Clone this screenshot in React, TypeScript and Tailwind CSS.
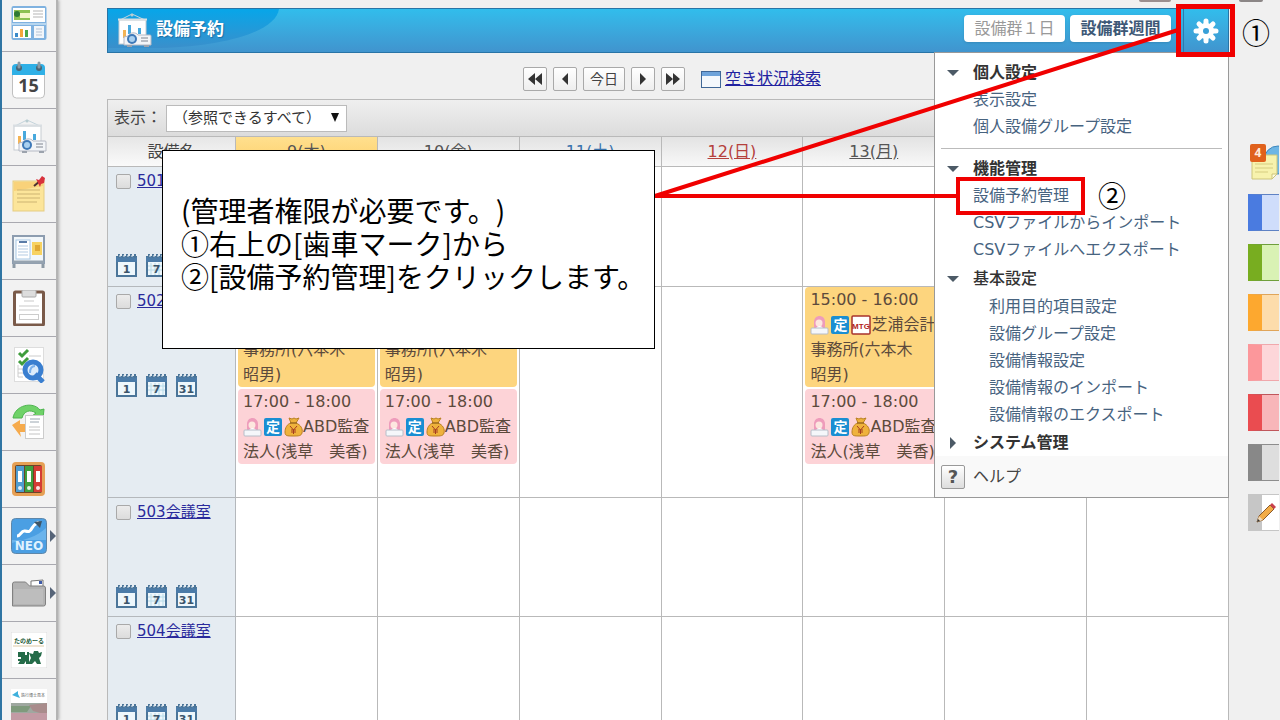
import type { ReactNode } from "react";

function PortalIcon() {
  return (
    <svg viewBox="0 0 36 36" className="h-9 w-9" aria-hidden>
      <rect x="0.5" y="1" width="35" height="34" rx="2" fill="#7fb2e0" />
      <rect x="2" y="3" width="32" height="14" fill="#fff" />
      <rect x="3" y="5" width="16" height="10" fill="#8cc152" />
      <path d="M9 8h10v5H9z" fill="#f3f7c9" />
      <circle cx="6" cy="9" r="3" fill="#2f7a35" />
      <path d="M22 6h10M22 9h10M22 12h10" stroke="#b5b5b5" />
      <path d="M1 19h34" stroke="#b7d6ef" strokeWidth="2" />
      <rect x="2" y="21" width="18" height="12" fill="#fff" />
      <rect x="23" y="21" width="10" height="12" fill="#f2f6fa" />
      <path d="M25 24h6M25 27h6M25 30h6" stroke="#b5c3d4" />
      <rect x="4" y="28" width="3" height="4" fill="#3a8ac9" />
      <rect x="9" y="24" width="3" height="8" fill="#f3a73b" />
      <rect x="14" y="25" width="3" height="7" fill="#4aa84a" />
    </svg>
  );
}

function ScheduleIcon() {
  return (
    <svg viewBox="0 0 36 38" className="h-[38px] w-9" aria-hidden>
      <rect x="1.5" y="4" width="32" height="33" rx="4" fill="#fff" stroke="#c0c0c0" />
      <path d="M1 14V7a4 4 0 0 1 4-4h25a4 4 0 0 1 4 4v7z" fill="#2fb0e6" />
      <circle cx="8" cy="7" r="3" fill="#4a6474" />
      <circle cx="28" cy="7" r="3" fill="#4a6474" />
      <path d="M8 6V2M28 6V2" stroke="#8b9aa4" strokeWidth="3" strokeLinecap="round" />
      <text x="17.5" y="31" textAnchor="middle" fontSize="18" fontWeight="bold" fontFamily="Open Sans, sans-serif" fill="#444">
        15
      </text>
    </svg>
  );
}

function FacilityIcon() {
  return (
    <svg viewBox="0 0 36 36" className="h-9 w-9" aria-hidden>
      <path d="M4 7 16 1l13 6" fill="none" stroke="#c4d4dc" />
      <circle cx="16" cy="2" r="1.5" fill="#b8ccd0" />
      <rect x="3" y="7" width="27" height="24" fill="#fff" stroke="#c6ccd1" />
      <path d="M2 6.500h29" stroke="#d9dee2" strokeWidth="2" />
      <rect x="7" y="17" width="3" height="8" fill="#f4b455" />
      <rect x="12" y="12" width="3" height="9" fill="#48a9dd" />
      <rect x="22" y="15" width="3" height="6" fill="#48a9dd" />
      <path d="M8 24l4-1c2-4 8-4 10-1h12a1 1 0 0 1 1 1v9H8z" fill="#f3f5f8" stroke="#b5b9c4" />
      <path d="M11 33h5M28 33h5" stroke="#9ca3ad" strokeWidth="2" />
      <circle cx="16" cy="26" r="5" fill="#3e79b8" />
      <circle cx="16" cy="26" r="3" fill="#a9d0f0" />
      <path d="M25 25h7M25 28h7" stroke="#b9bdc4" strokeWidth="2" />
    </svg>
  );
}

function MemoIcon() {
  return (
    <svg viewBox="0 0 36 36" className="h-9 w-9" aria-hidden>
      <rect x="2" y="5" width="31" height="30" fill="#fce59a" stroke="#e5cc82" />
      <path d="M3 6h29v4L3 15z" fill="#f9d27a" />
      <path d="M6 14h23M6 18h23M6 22h23M6 26h20" stroke="#cdb472" />
      <path d="M23 10l6-5" stroke="#4b3030" strokeWidth="2" />
      <path d="M25 3l3 1 3-4 3 2-1 5-3 1-1 3z" fill="#d8323c" />
    </svg>
  );
}

function BulletinIcon() {
  return (
    <svg viewBox="0 0 36 36" className="h-9 w-9" aria-hidden>
      <path d="M3 30v5M32 30v5" stroke="#8d9aa5" strokeWidth="3" />
      <rect x="2" y="3" width="31" height="27" fill="#f2f7fa" stroke="#8d9db0" strokeWidth="2" />
      <path d="M2 29h31" stroke="#96a3b0" strokeWidth="3" />
      <rect x="5" y="7" width="14" height="19" fill="#fff" stroke="#a8c8e4" />
      <path d="M8 9h8" stroke="#5a7ca8" strokeWidth="2" />
      <path d="M7 13h10M7 16h10M7 19h10M7 22h10" stroke="#b3cbe3" />
      <rect x="21" y="9" width="10" height="13" fill="#f7d261" />
      <rect x="24" y="12" width="5" height="6" fill="#e0a833" />
    </svg>
  );
}

function ReportIcon() {
  return (
    <svg viewBox="0 0 36 36" className="h-9 w-9" aria-hidden>
      <rect x="3.500" y="2" width="29" height="33" rx="1" fill="#fff" stroke="#7a5a49" strokeWidth="3" />
      <rect x="11" y="0" width="14" height="7" rx="1" fill="#ddd" stroke="#aaa" />
      <path d="M13 11h10M8 16h20M8 20h20" stroke="#c9c9c9" />
      <rect x="8.500" y="24.500" width="19" height="5" fill="none" stroke="#ccc" />
    </svg>
  );
}

function TodoIcon() {
  return (
    <svg viewBox="0 0 36 36" className="h-9 w-9" aria-hidden>
      <rect x="3.500" y="0.500" width="29" height="34" fill="#fff" stroke="#ddd" />
      <path d="M8 6l3 3 6-6M8 14l3 3 6-6" stroke="#3f9d3c" strokeWidth="3" fill="none" />
      <path d="M18 9h12M7 18v12M7 22h5M7 26h5M7 30h5" stroke="#ccc" />
      <circle cx="22" cy="23" r="8" fill="#dcecfb" stroke="#3a7fd0" strokeWidth="5" />
      <path d="M24 27l8 8" stroke="#3a7fd0" strokeWidth="5" />
      <path d="M19 26c0-5 2-7 5-7" stroke="#7cb2ec" strokeWidth="2" fill="none" />
    </svg>
  );
}

function WorkflowIcon() {
  return (
    <svg viewBox="0 0 36 36" className="h-9 w-9" aria-hidden>
      <path d="M2 14C4 1 22-3 29 6l4-1-1 10-11-3 4-3c-6-4-12-2-14 5z" fill="#6fd268" stroke="#4cb44d" />
      <path d="M1 21l8-5v4h7v8H9l1 5z" fill="#f6ab4d" />
      <rect x="14.500" y="11.500" width="18" height="23" fill="#fff" stroke="#ccc" />
      <path d="M19 15h10M19 18h9" stroke="#9aa6b0" strokeWidth="1" />
      <path d="M18 23h11M18 26h11M18 30h11" stroke="#c4c4c4" />
    </svg>
  );
}

function CabinetIcon() {
  return (
    <svg viewBox="0 0 36 36" className="h-9 w-9" aria-hidden>
      <rect x="1" y="1" width="33" height="34" rx="4" fill="#e6a055" />
      <rect x="4" y="4" width="27" height="28" rx="2" fill="#6b4528" />
      <rect x="5" y="5" width="8" height="26" fill="#4f9ccf" />
      <rect x="14" y="5" width="8" height="26" fill="#3f9f3f" />
      <rect x="23" y="5" width="8" height="26" fill="#d43c35" />
      <path d="M7 10h4v11H7zM16 10h4v11h-4zM25 10h4v11h-4z" fill="#fff" />
      <circle cx="9" cy="27" r="2" fill="#e4eef6" />
      <circle cx="18" cy="27" r="2" fill="#e4f4e4" />
      <circle cx="27" cy="27" r="2" fill="#fbe4e4" />
    </svg>
  );
}

function NeoIcon() {
  return (
    <svg viewBox="0 0 36 36" className="h-9 w-9" aria-hidden>
      <rect x="0.5" y="0.5" width="35" height="35" rx="4" fill="#4b9fe3" stroke="#5e87aa" />
      <path d="M1 25C12 22 26 19 35 10v12H1z" fill="#6bb4ec" />
      <path d="M6 18c4 0 4-6 8-5s5 1 7-3 4-4 7-6" fill="none" stroke="#fff" strokeWidth="3" />
      <path d="M23 4l8-1-2 7" fill="#3d5568" />
      <text x="18" y="32" textAnchor="middle" fontSize="12" fontWeight="bold" fontFamily="DejaVu Sans, sans-serif" fill="#dff2ff">
        NEO
      </text>
    </svg>
  );
}

function FolderIcon() {
  return (
    <svg viewBox="0 0 36 36" className="h-9 w-9" aria-hidden>
      <path d="M20 6l12-1v8H20z" fill="#fff" stroke="#777" />
      <path d="M28 6h3v3h-3z" fill="#3d5aa8" />
      <path d="M1.500 31V9a2 2 0 0 1 2-2h11l4 4h14a2 2 0 0 1 2 2v16a2 2 0 0 1-2 2z" fill="#b3b3b3" stroke="#818181" />
      <path d="M3 14h29v15H3z" fill="#bdbdbd" />
    </svg>
  );
}

function TanomailIcon() {
  return (
    <svg viewBox="0 0 36 36" className="h-9 w-9" aria-hidden>
      <rect width="36" height="36" fill="#fff" stroke="#ddd" />
      <text x="18" y="11" textAnchor="middle" fontSize="6" fontWeight="bold" fontFamily="Noto Sans CJK JP, sans-serif" fill="#245b38">
        たのめーる
      </text>
      <path d="M2 14h31" stroke="#ddc9a5" />
      <path d="M7 20h7v3h2v-3h2v12h-3v-3l-2 3H7l2-3H7v-2h3v-2H7z" fill="#246b48" />
      <path d="M18 21l4 1 1-3h4l1 2 3-1-1 4-2 2 2 6h-4l-2-3-3 3h-4l3-6z" fill="#246b48" />
    </svg>
  );
}

function TravelIcon() {
  return (
    <svg viewBox="0 0 36 36" className="h-9 w-9" aria-hidden>
      <rect width="36" height="36" fill="#fff" />
      <path d="M1 6l6-4v3l2 4-3-1z" fill="#3fb0dc" />
      <text x="22" y="8" textAnchor="middle" fontSize="4" fontFamily="Noto Sans CJK JP, sans-serif" fill="#555">
        旅行博士見本
      </text>
      <rect y="14" width="36" height="22" fill="#9fa8a0" />
      <path d="M0 17h20l-4 6H0z" fill="#7f9a7c" />
      <path d="M18 16l18-2v12L22 22z" fill="#a98c8c" />
      <path d="M0 24h36v12H0z" fill="#c39aa4" />
    </svg>
  );
}

const SIDE_ITEMS: { label: string; icon: ReactNode; expandable?: boolean }[] = [
  { label: "ポータル", icon: <PortalIcon /> },
  { label: "スケジュール", icon: <ScheduleIcon /> },
  { label: "設備予約", icon: <FacilityIcon /> },
  { label: "メモ", icon: <MemoIcon /> },
  { label: "掲示板", icon: <BulletinIcon /> },
  { label: "レポート", icon: <ReportIcon /> },
  { label: "ToDo", icon: <TodoIcon /> },
  { label: "ワークフロー", icon: <WorkflowIcon /> },
  { label: "キャビネット", icon: <CabinetIcon /> },
  { label: "NEO", icon: <NeoIcon />, expandable: true },
  { label: "リンク", icon: <FolderIcon />, expandable: true },
  { label: "たのめーる", icon: <TanomailIcon /> },
  { label: "旅行", icon: <TravelIcon /> },
];

function Sidebar() {
  return (
    <nav className="w-[58px] shrink-0 border-r-2 border-l-2 border-r-[#b4b4b4] border-l-[#2f75a3] bg-[#f2f2f2] shadow-[1px_0_3px_#aaa]">
      <ul className="-mt-[5px]">
        {SIDE_ITEMS.map((item) => (
          <li key={item.label} className="relative h-[57px] border-b border-[#a9a9b0]">
            <a href="#" aria-label={item.label} className="flex h-full items-center justify-center">
              {item.icon}
            </a>
            {item.expandable && (
              <svg viewBox="0 0 6 12" className="absolute top-[22px] right-0 h-3 w-[6px]" aria-hidden>
                <path d="M0 0l6 6-6 6z" fill="#566478" />
              </svg>
            )}
          </li>
        ))}
      </ul>
    </nav>
  );
}

const TABS = [
  { id: "blue", className: "border-[#5f82c4] border-l-[#4a7be0] bg-[#cfddfb]" },
  { id: "green", className: "border-[#6f9f3c] border-l-[#78ad20] bg-[#d9f2b4]" },
  { id: "orange", className: "border-[#e0a55a] border-l-[#fda82f] bg-[#fddcab]" },
  { id: "pink", className: "border-[#f0a8ac] border-l-[#fc979b] bg-[#fdd6d9]" },
  { id: "red", className: "border-[#c0575c] border-l-[#ea4c50] bg-[#f8b6b9]" },
  { id: "gray", className: "border-[#8d8d8d] border-l-[#888888] bg-[#dedede]" },
];

function StickyTabs() {
  return (
    <aside className="flex w-[51px] shrink-0 flex-col items-end gap-[13px] pr-px">
      <span className="mr-4 mb-[129px] h-[2px] w-6 rounded-b-sm bg-[#8b8686]" />
      <button type="button" aria-label="付箋 4件" className="h-[37px] w-[31px] overflow-hidden">
        <svg viewBox="0 0 31 37" className="h-full w-full" aria-hidden>
          <circle cx="30" cy="16" r="14" fill="#6db5e4" stroke="#3d87bd" />
          <path d="M4 11h25v19l-5 5H4z" fill="#f7f2ad" stroke="#ccc57a" />
          <path d="M7 20h18M7 24h18M7 28h13" stroke="#d6cd80" />
          <path d="M29 30h-5v5z" fill="#fffce0" stroke="#ccc57a" />
          <rect x="2" y="0" width="16" height="18" rx="2" fill="#e0611c" />
          <text x="10" y="13" textAnchor="middle" fontSize="12" fontFamily="Open Sans, sans-serif" fontWeight="bold" fill="#ffe9d8">
            4
          </text>
        </svg>
      </button>
      {TABS.map((tab) => (
        <button
          key={tab.id}
          type="button"
          aria-label={tab.id}
          className={`h-[37px] w-[31px] border-y border-l-[14px] ${tab.className}`}
        />
      ))}
      <button type="button" aria-label="編集" className="h-[37px] w-[31px] border-y border-l-[14px] border-[#c6c6c6] bg-white">
        <svg viewBox="0 0 22 22" className="-ml-[7px] h-[22px] w-[22px]" aria-hidden>
          <path d="M2 20l2-6L15 3l4 4L8 18z" fill="#f2ac47" stroke="#8a5a2c" />
          <path d="M15 3l2-2 4 4-2 2z" fill="#c9404c" />
          <path d="M2 20l2-6 4 4z" fill="#efd8b5" />
          <path d="M2 20l1-3 2 2z" fill="#333" />
        </svg>
      </button>
    </aside>
  );
}

function MenuHeading({ children, closed = false, light = false }: { children: ReactNode; closed?: boolean; light?: boolean }) {
  return (
    <button
      type="button"
      className={`flex h-[27px] items-center pl-3 text-[#333] ${light ? "font-medium" : "font-bold"}`}
    >
      <svg viewBox="0 0 12 12" className="mr-[14px] h-3 w-3" aria-hidden>
        <path d={closed ? "M3 0l6 6-6 6z" : "M0 3h12L6 9z"} fill="#4c5a66" />
      </svg>
      {children}
    </button>
  );
}

function MenuLinks({ items }: { items: string[] }) {
  return (
    <ul className="pl-[38px] text-[#47637f]">
      {items.map((item) => (
        <li key={item}>
          <a href="#" className="block h-[27px] leading-[27px]">
            {item}
          </a>
        </li>
      ))}
    </ul>
  );
}

function SettingsMenu() {
  return (
    <div className="absolute top-full -right-px z-10 w-[295px] border border-[#999] bg-white text-base whitespace-nowrap">
      <div className="pt-1.5">
        <MenuHeading>個人設定</MenuHeading>
        <MenuLinks items={["表示設定", "個人設備グループ設定"]} />
      </div>
      <hr className="mx-1.5 mt-2 mb-1.5 border-[#bbb]" />
      <div>
        <MenuHeading>機能管理</MenuHeading>
        <MenuLinks items={["設備予約管理", "CSVファイルからインポート", "CSVファイルへエクスポート"]} />
      </div>
      <div className="pt-0.5">
        <MenuHeading light>基本設定</MenuHeading>
        <div className="pt-px pl-4">
          <MenuLinks
            items={[
              "利用目的項目設定",
              "設備グループ設定",
              "設備情報設定",
              "設備情報のインポート",
              "設備情報のエクスポート",
            ]}
          />
        </div>
      </div>
      <div className="pt-px">
        <MenuHeading closed>システム管理</MenuHeading>
      </div>
      <a href="#" className="flex h-[41px] items-center gap-2 bg-[#f9f9f9] pl-1.5 text-[#444]">
        <span className="flex h-6 w-6 items-center justify-center rounded-xs border border-[#999] bg-linear-to-b from-white to-[#ddd] text-lg font-bold text-[#555]">
          ?
        </span>
        ヘルプ
      </a>
    </div>
  );
}

function PageHeader() {
  return (
    <header className="relative z-10 flex h-[45px] items-center border border-[#2874a6] bg-linear-to-b from-[#31bdec] to-[#4094ce]">
      <svg viewBox="0 0 180 43" className="absolute top-0 left-0 h-[43px] w-[180px]" aria-hidden>
        <defs>
          <linearGradient id="swoosh" x1="0" y1="0" x2="0" y2="1">
            <stop offset="0" stopColor="#07a6e9" />
            <stop offset="1" stopColor="#3a8fcb" />
          </linearGradient>
        </defs>
        <path d="M0 0h171c-3 22-52 37-118 39H0z" fill="url(#swoosh)" />
      </svg>
      <div className="relative flex flex-1 items-center gap-1 pl-2">
        <FacilityIcon />
        <h1 className="mb-1 text-[17px] leading-6 font-bold text-white [text-shadow:1px_1px_1px_#1c6fa5]">設備予約</h1>
      </div>
      <div className="mb-1 flex gap-[5px] pr-3 text-base">
        <button type="button" disabled className="h-[27px] w-[101px] rounded-sm bg-white text-[#999] shadow-sm">
          設備群１日
        </button>
        <button type="button" className="h-[27px] w-[101px] rounded-sm bg-white font-bold text-[#3d5876] shadow-sm">
          設備群週間
        </button>
      </div>
      <button
        type="button"
        aria-label="設定"
        className="flex h-full w-[45px] items-center justify-center border-l border-[#2b79af]"
      >
        <svg viewBox="0 0 26 26" className="h-[26px] w-[26px]" aria-hidden>
          <g stroke="#fff" strokeWidth="5" strokeLinecap="round">
            <path d="M13 3v20M3 13h20M6 6l14 14M20 6L6 20" />
          </g>
          <circle cx="13" cy="13" r="8" fill="#fff" />
          <circle cx="13" cy="13" r="3" fill="#38a0d8" />
        </svg>
      </button>
      <SettingsMenu />
    </header>
  );
}

const ICON_BUTTON =
  "flex h-6 items-center justify-center rounded-xs border border-[#a9a9a9] bg-linear-to-b from-white to-[#eee]";

function WeekNav() {
  return (
    <div className="flex h-[46px] items-center justify-center gap-1.5 pt-1.5 pl-2">
      <button type="button" aria-label="前週" className={`w-6 ${ICON_BUTTON}`}>
        <svg viewBox="0 0 14 12" className="h-3 w-[14px]" aria-hidden>
          <path d="M7 0v12L0 6zM14 0v12L7 6z" fill="#333" />
        </svg>
      </button>
      <button type="button" aria-label="前日" className={`w-6 ${ICON_BUTTON}`}>
        <svg viewBox="0 0 14 12" className="h-3 w-[14px]" aria-hidden>
          <path d="M10 0v12L4 6z" fill="#333" />
        </svg>
      </button>
      <button type="button" className={`w-[42px] text-sm text-[#444] ${ICON_BUTTON}`}>
        今日
      </button>
      <button type="button" aria-label="翌日" className={`w-6 ${ICON_BUTTON}`}>
        <svg viewBox="0 0 14 12" className="h-3 w-[14px]" aria-hidden>
          <path d="M4 0v12l6-6z" fill="#333" />
        </svg>
      </button>
      <button type="button" aria-label="翌週" className={`w-6 ${ICON_BUTTON}`}>
        <svg viewBox="0 0 14 12" className="h-3 w-[14px]" aria-hidden>
          <path d="M0 0v12l7-6zM7 0v12l7-6z" fill="#333" />
        </svg>
      </button>
      <a href="#" className="ml-2.5 flex items-center gap-1 text-[#2222a0] underline">
        <svg viewBox="0 0 20 17" className="h-[17px] w-5" aria-hidden>
          <rect x="0.5" y="0.5" width="19" height="16" fill="#f4f8fc" stroke="#3f6797" />
          <path d="M1 1h18v4H1z" fill="#6ea3da" />
        </svg>
        空き状況検索
      </a>
    </div>
  );
}

function DayIcon({ label }: { label: string }) {
  return (
    <a href="#" aria-label={`${label}日表示`}>
      <svg viewBox="0 0 21 23" className="h-[23px] w-[21px]" aria-hidden>
        <rect x="1" y="3" width="19" height="19" fill="#eef7fc" stroke="#4b7599" strokeWidth="2" />
        <path d="M0 3h21v5H0z" fill="#4b7ba8" />
        <path d="M3 0v4M7 0v4M11 0v4M15 0v4M19 0v4" stroke="#4b7599" strokeWidth="2" />
        <path d="M4 1v2M8 1v2M12 1v2M16 1v2" stroke="#dfe9f1" />
        {label === "7" && <path d="M5 9v12M9 9v12M13 9v12M17 9v12M2 12h17M2 16h17" stroke="#b9dcea" />}
        <text x="10.500" y="18.500" textAnchor="middle" fontSize="11" fontWeight="bold" fontFamily="DejaVu Sans, sans-serif" fill="#3b556b">
          {label}
        </text>
      </svg>
    </a>
  );
}

function PersonIcon() {
  return (
    <svg viewBox="0 0 19 20" className="h-5 w-[19px]" aria-hidden>
      <path d="M4 13V7c0-8 11-8 11 0v6z" fill="#ee9cbb" />
      <circle cx="9" cy="8" r="3.500" fill="#fde6df" />
      <path d="M6 14c0-4 7-4 7 0z" fill="#fff" />
      <rect x="1" y="13" width="17" height="6" rx="1" fill="#f5f7fa" stroke="#b6bdc8" />
    </svg>
  );
}

function FixedIcon() {
  return (
    <span className="flex h-[18px] w-[18px] items-center justify-center rounded-xs bg-[#1a8ed2] text-sm leading-none font-bold text-white">
      定
    </span>
  );
}

function MeetingIcon() {
  return (
    <svg viewBox="0 0 20 20" className="h-5 w-5" aria-hidden>
      <rect x="1" y="1" width="18" height="18" rx="1" fill="#fff" stroke="#a8322c" strokeWidth="1.500" />
      <text x="10" y="14" textAnchor="middle" fontSize="8" fontWeight="bold" fontFamily="Liberation Sans, sans-serif" fill="#b32420">
        MTG
      </text>
    </svg>
  );
}

function MoneyIcon() {
  return (
    <svg viewBox="0 0 19 20" className="h-5 w-[19px]" aria-hidden>
      <path d="M5 1l3 1 2-1 2 1 3-1-3 5c5 2 7 6 6 10-1 3-3 3-9 3s-8 0-8-4c0-4 2-8 6-9z" fill="#efb23c" stroke="#b98021" />
      <path d="M6 6h7" stroke="#9c6a1e" strokeWidth="1.500" />
      <path d="M6 9l3.500 4L13 9M9.500 13v4M7 13h5M7 15h5" stroke="#a53c20" fill="none" />
    </svg>
  );
}

function DayEvents() {
  return (
    <div className="flex flex-col gap-0.5 overflow-hidden px-[2px] leading-[25px] whitespace-nowrap text-[#5c4a3c]">
      <div className="rounded-sm bg-[#fdd57e] pl-[5px]">
        <p>15:00 - 16:00</p>
        <p className="flex items-center">
          <PersonIcon />
          <span className="mx-[2px]">
            <FixedIcon />
          </span>
          <MeetingIcon />
          芝浦会計
        </p>
        <p>事務所(六本木</p>
        <p>昭男)</p>
      </div>
      <div className="rounded-sm bg-[#fdd3d7] pl-[5px]">
        <p>17:00 - 18:00</p>
        <p className="flex items-center">
          <PersonIcon />
          <span className="mx-[2px]">
            <FixedIcon />
          </span>
          <MoneyIcon />
          ABD監査
        </p>
        <p>法人(浅草　美香)</p>
      </div>
    </div>
  );
}

const DAYS = [
  { label: "9(木)", className: "bg-linear-to-b from-[#ffe08e] to-[#fdcf6a] text-[#555]", busy: true },
  { label: "10(金)", className: "bg-linear-to-b from-[#e3e3e3] to-[#f8f8f8] text-[#555]", busy: true },
  { label: "11(土)", className: "bg-linear-to-b from-[#e3e3e3] to-[#f8f8f8] text-[#3b74ad]", busy: false },
  { label: "12(日)", className: "bg-linear-to-b from-[#e3e3e3] to-[#f8f8f8] text-[#b5403c]", busy: false },
  { label: "13(月)", className: "bg-linear-to-b from-[#e3e3e3] to-[#f8f8f8] text-[#555]", busy: true },
  { label: "14(火)", className: "bg-linear-to-b from-[#e3e3e3] to-[#f8f8f8] text-[#555]", busy: false },
  { label: "15(水)", className: "bg-linear-to-b from-[#e3e3e3] to-[#f8f8f8] text-[#555]", busy: false },
];

const ROOMS = [
  { id: "501", height: "h-[120px]", events: false },
  { id: "502", height: "h-[211px]", events: true },
  { id: "503", height: "h-[119px]", events: false },
  { id: "504", height: "h-[119px]", events: false },
];

function FacilityTable() {
  return (
    <table className="w-full table-fixed border-separate border-spacing-0 bg-white">
      <thead>
        <tr className="h-[30px]">
          <th className="w-[128px] border-r border-b border-[#b9b9b9] bg-linear-to-b from-[#e6e6e6] to-[#fafafa] p-0 font-normal text-[#444]">
            設備名
          </th>
          {DAYS.map((day) => (
            <th key={day.label} className={`border-r border-b border-[#b9b9b9] p-0 font-normal ${day.className}`}>
              <a href="#" className="underline">
                {day.label}
              </a>
            </th>
          ))}
        </tr>
      </thead>
      <tbody>
        {ROOMS.map((room) => (
          <tr key={room.id} className={room.height}>
            <td className="border-r border-b border-[#b4b8bc] bg-[#e5ecf2] p-0 pl-2 align-top">
              <div className="flex h-7 items-center gap-1.5 text-[15px]">
                <input
                  type="checkbox"
                  id={`room-${room.id}`}
                  className="h-[15px] w-[15px] appearance-none rounded-xs border border-[#a9a9a9] bg-linear-to-b from-[#ececec] to-[#dcdcdc]"
                />
                <label htmlFor={`room-${room.id}`}>
                  <a href="#" className="text-[#2a2a9c] underline">
                    {room.id}会議室
                  </a>
                </label>
              </div>
              <div className="mt-[59px] flex gap-[9px]">
                <DayIcon label="1" />
                <DayIcon label="7" />
                <DayIcon label="31" />
              </div>
            </td>
            {DAYS.map((day) => (
              <td key={day.label} className="border-r border-b border-[#b9b9b9] p-0 align-top">
                {room.events && day.busy && <DayEvents />}
              </td>
            ))}
          </tr>
        ))}
      </tbody>
    </table>
  );
}

// Red guide lines, step numbers and the instruction box laid over the page
function Annotations() {
  return (
    <div className="pointer-events-none absolute inset-0 z-20 font-['Noto_Sans_CJK_JP',sans-serif] text-black">
      <svg className="absolute inset-0 h-full w-full" aria-hidden>
        <g fill="none" stroke="#f00000">
          <path d="M655 196L1178 30M655 196H958" strokeWidth="4" />
          <rect x="1178.500" y="6.500" width="54" height="48" strokeWidth="5" />
          <rect x="958" y="179" width="125" height="34" strokeWidth="4" />
        </g>
      </svg>
      <span className="absolute top-[18px] left-[1242px] text-[28px] leading-7">①</span>
      <span className="absolute top-[181px] left-[1098px] text-[28px] leading-7">②</span>
      <div className="absolute top-[150px] left-[162px] flex h-[199px] w-[493px] items-center border border-black bg-white pb-3 pl-[18px]">
        <p className="text-[28px] leading-[33px] whitespace-nowrap [text-spacing-trim:space-all]">
          (管理者権限が必要です。)
          <br />
          ①右上の[歯車マーク]から
          <br />
          ②[設備予約管理]をクリックします。
        </p>
      </div>
    </div>
  );
}

export default function App() {
  return (
    <div className="relative flex h-screen overflow-hidden bg-[#f0f0f0] font-['DejaVu_Sans','Noto_Sans_CJK_JP',sans-serif] text-base text-[#444]">
      <Sidebar />
      <main className="ml-[49px] min-w-0 flex-1">
        <div className="flex h-2 justify-end pr-[58px]">
          <span className="h-[2px] w-8 rounded-b-sm bg-[#9a8f8f]" />
        </div>
        <PageHeader />
        <WeekNav />
        <section className="border-t border-l border-[#b9b9b9]">
          <div className="flex h-[37px] items-center gap-1 border-b border-[#b9b9b9] bg-linear-to-b from-[#efefef] to-[#dcdcdc] pl-1.5">
            <label htmlFor="facility-group" className="w-12">
              表示：
            </label>
            <div className="relative">
              <select
                id="facility-group"
                className="h-[27px] w-[181px] appearance-none border border-[#bbb] bg-white pl-1.5 text-[15px] text-[#333]"
              >
                <option>（参照できるすべて）</option>
              </select>
              <svg viewBox="0 0 8 9" className="pointer-events-none absolute top-2 right-2 h-[9px] w-2" aria-hidden>
                <path d="M0 0h8L4 9z" fill="#111" />
              </svg>
            </div>
          </div>
          <FacilityTable />
        </section>
      </main>
      <StickyTabs />
      <Annotations />
    </div>
  );
}
